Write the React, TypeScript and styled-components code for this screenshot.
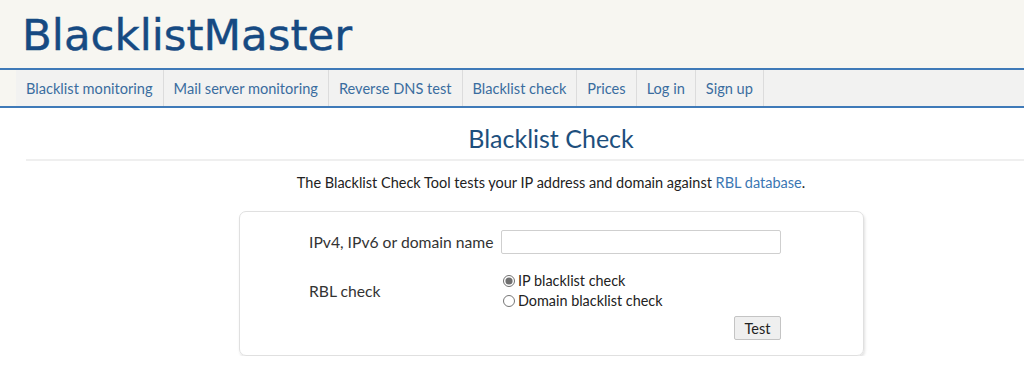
import React from "react";
import styled, { createGlobalStyle } from "styled-components";

const Global = createGlobalStyle`
  html, body { margin: 0; padding: 0; background: #fff; }
  body { font-family: Lato, "Open Sans", sans-serif; color: #333; }
  * { box-sizing: border-box; }
`;

const Header = styled.header`
  background: #f7f6f1;
  height: 68px;
  padding: 9px 0 0 22px;
`;

const Logo = styled.a`
  font-family: "DejaVu Sans", Verdana, sans-serif;
  font-size: 43.5px;
  line-height: 52px;
  color: #164a82;
  text-decoration: none;
  -webkit-text-stroke: 0.4px #164a82;
`;

const NavBar = styled.nav`
  background: #f7f6f1;
  border-top: 2px solid #3f7ab8;
  border-bottom: 2px solid #3f7ab8;
  padding-left: 16px;
`;

const NavList = styled.ul`
  list-style: none;
  margin: 0;
  padding: 0;
  display: flex;
  background: #f2f2f1;
  height: 36px;
`;

const NavItem = styled.li`
  border-right: 1px solid #dcdcdc;
  display: flex;
  align-items: center;
`;

const NavLink = styled.a`
  color: #3a6d9f;
  font-size: 14.6px;
  padding: 0 10px;
  text-decoration: none;
`;

const Main = styled.main`
  padding: 0 0 0 26px;
`;

const Title = styled.h1`
  margin: 0;
  padding: 14px 0 0 52px;
  height: 53px;
  text-align: center;
  font-weight: 400;
  font-size: 25px;
  line-height: 32px;
  color: #1d4f7d;
  border-bottom: 2px solid #efefef;
`;

const Intro = styled.p`
  margin: 13px 0 0;
  padding-left: 52px;
  text-align: center;
  font-size: 14.5px;
  line-height: 18px;
  color: #222;
`;

const Link = styled.a`
  color: #3b77b3;
  text-decoration: none;
`;

const Card = styled.form`
  margin: 19px 0 0 213px;
  width: 625px;
  height: 145px;
  border: 1px solid #e0e0e0;
  border-radius: 7px;
  box-shadow: 1px 2px 3px rgba(0, 0, 0, 0.12);
  padding: 18px 82px 0 69px;
  display: grid;
  grid-template-columns: 192px 280px;
  grid-template-rows: 24px 56px 30px;
  align-items: center;
`;

const Label = styled.label`
  font-size: 15.7px;
  color: #333;
`;

const Input = styled.input`
  width: 280px;
  height: 24px;
  border: 1px solid #cfcfcf;
  border-radius: 2px;
  margin: 0;
  font-family: inherit;
`;

const Radios = styled.div`
  display: flex;
  flex-direction: column;
  gap: 4px;
  padding-top: 18px;
`;

const RadioRow = styled.label`
  display: flex;
  align-items: center;
  font-size: 14.4px;
  line-height: 16px;
  color: #222;
`;

const Radio = styled.input`
  margin: 0 3px 0 2px;
  width: 12px;
  height: 12px;
  accent-color: #6f6f6f;
`;

const RblLabel = styled(Label)`
  padding-top: 18px;
`;

const ButtonCell = styled.div`
  grid-column: 2;
  display: flex;
  justify-content: flex-end;
  align-self: end;
`;

const Button = styled.button`
  font-family: Lato, sans-serif;
  font-size: 14.5px;
  color: #222;
  background: #efefef;
  border: 1px solid #c4c4c4;
  border-radius: 2px;
  height: 24px;
  width: 47px;
  padding: 0;
`;

export default function App() {
  return (
    <>
      <Global />
      <Header>
        <Logo href="#">BlacklistMaster</Logo>
      </Header>
      <NavBar>
        <NavList>
          {[
            "Blacklist monitoring",
            "Mail server monitoring",
            "Reverse DNS test",
            "Blacklist check",
            "Prices",
            "Log in",
            "Sign up",
          ].map((t) => (
            <NavItem key={t}>
              <NavLink href="#">{t}</NavLink>
            </NavItem>
          ))}
        </NavList>
      </NavBar>
      <Main>
        <Title>Blacklist Check</Title>
        <Intro>
          The Blacklist Check Tool tests your IP address and domain against{" "}
          <Link href="#">RBL database</Link>.
        </Intro>
        <Card onSubmit={(e) => e.preventDefault()}>
          <Label htmlFor="q">IPv4, IPv6 or domain name</Label>
          <Input id="q" type="text" />
          <RblLabel>RBL check</RblLabel>
          <Radios>
            <RadioRow>
              <Radio type="radio" name="t" defaultChecked />
              IP blacklist check
            </RadioRow>
            <RadioRow>
              <Radio type="radio" name="t" />
              Domain blacklist check
            </RadioRow>
          </Radios>
          <ButtonCell>
            <Button type="submit">Test</Button>
          </ButtonCell>
        </Card>
      </Main>
    </>
  );
}
